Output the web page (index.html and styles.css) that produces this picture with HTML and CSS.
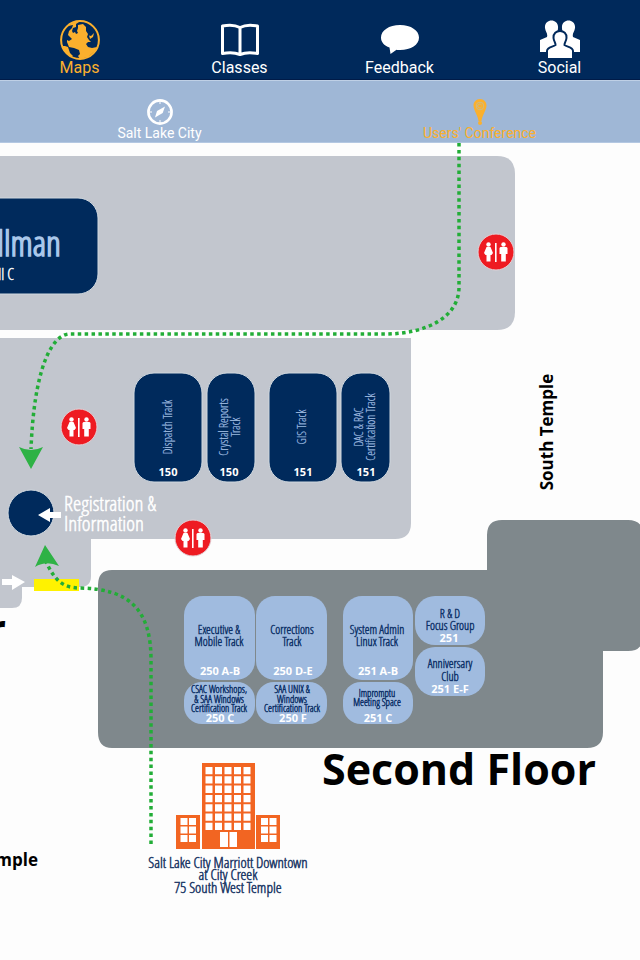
FILE: index.html
```html
<!DOCTYPE html>
<html lang="en">
<head>
<meta charset="utf-8">
<meta name="viewport" content="width=device-width, initial-scale=1">
<title>Users' Conference Map</title>
<link rel="stylesheet" href="styles.css">
</head>
<body>
<nav class="tabs" aria-label="Main">
  <a class="tab active" href="#maps">
    <svg class="tab-icon" viewBox="0 0 40 40" aria-hidden="true">
      <circle cx="20" cy="20" r="18.9" fill="none" stroke="currentColor" stroke-width="2"/>
      <path fill="currentColor" d="M8 6 L14 2 L19 2 L16 4 L16 7 L13 8 L12 11 L13 13 L15 12 L16 14 L18 13 L17 11 L18 8 L18 5 L23 4 L26 7 L26 11 L28 14 L27 17 L29 20 L31 22 L28 22 L26 24 L28 27 L32 28 L37 27 L35 31 L28 37 L20 39 L18 36 L20 34 L19 30 L14 28 L9 27 L7 22 L7 20 L9 21 L12 19 L10 17 L8 15 L9 11 L12 8 L13 5 Z"/>
      <path fill="currentColor" d="M2 26 L5 26 L8 27 L10 33 L13 36 L11 37 L5 32 Z"/>
      <path fill="currentColor" d="M29 15.500 L31 16 L34 13 L33 17 L30 19 Z"/>
    </svg>
    <span>Maps</span>
  </a>
  <a class="tab" href="#classes">
    <svg class="tab-icon" viewBox="0 0 40 40" aria-hidden="true">
      <path fill="none" stroke="currentColor" stroke-width="3" stroke-linejoin="round" d="M20 7.500 C15 4.800 8 4.800 2.500 6 V33.500 C8 32.500 15 32.500 20 34.500 C25 32.500 32 32.500 37.500 33.500 V6 C32 4.800 25 4.800 20 7.500 V34.500"/>
    </svg>
    <span>Classes</span>
  </a>
  <a class="tab" href="#feedback">
    <svg class="tab-icon" viewBox="0 0 40 40" aria-hidden="true">
      <path fill="currentColor" d="M20 5 C31 5 39 10.500 39 17.500 C39 25 31 30 20 30 C18.500 30 17.500 30 16.500 29.700 L10.500 34 L9.500 27.500 C4 25.500 1 22 1 17.500 C1 10.500 9 5 20 5 Z"/>
    </svg>
    <span>Feedback</span>
  </a>
  <a class="tab" href="#social">
    <svg class="tab-icon" viewBox="0 0 40 40" aria-hidden="true">
      <g fill="currentColor">
        <path d="M5 8 C4 -2 19 -2 18 8 C18 12 16 13 16 16 L21 20 V32 H0 V20 L7 17 C8 13 5.500 12 5 8 Z"/>
        <path d="M22 8 C21 -2 36 -2 35 8 C34.500 12 32 13 33 17 L40 20 V32 H19 V20 L24 16 C24 13 22 12 22 8 Z"/>
        <path class="front-person" d="M13.500 18 C12.500 8.500 27.500 8.500 26.500 18 C26 22 24.500 22 24.500 25 C27 27 33 27 33 31 V39 H7 V31 C7 27 13 27 15.500 25 C15.500 22 14 22 13.500 18 Z"/>
      </g>
    </svg>
    <span>Social</span>
  </a>
</nav>

<nav class="subtabs" aria-label="Maps">
  <a class="subtab" href="#city">
    <svg class="subtab-icon" viewBox="0 0 26 26" aria-hidden="true">
      <circle cx="13" cy="13" r="11.600" fill="none" stroke="currentColor" stroke-width="2.600"/>
      <path fill="currentColor" d="M18 7.500 L15.700 14 L8 18.500 L10 12 Z"/>
      <path stroke="currentColor" stroke-width="1" d="M13 2 V5 M13 21 V24 M2 13 H5 M21 13 H24"/>
    </svg>
    <span>Salt Lake City</span>
  </a>
  <a class="subtab active" href="#conference" aria-current="page">
    <svg class="subtab-icon" viewBox="0 0 26 26" aria-hidden="true">
      <path fill="currentColor" d="M13 0 C17 0 19.500 3 19.500 6.500 C19.500 11 15 17 14.500 22 H11.500 C11 17 6.500 11 6.500 6.500 C6.500 3 9 0 13 0 Z"/>
      <circle cx="13" cy="24" r="2" fill="currentColor"/>
      <circle cx="13" cy="7" r="3.800" fill="none" stroke="#cdbb86" stroke-width="1"/>
      <path fill="none" stroke="#cdbb86" stroke-width="1" d="M14.500 6 A2 2 0 1 0 14.500 8"/>
    </svg>
    <span>Users' Conference</span>
  </a>
</nav>

<main>
<svg class="map" viewBox="0 143 640 817" role="img" aria-label="Conference floor plan">
  <defs>
    <g id="restroom">
      <circle r="18" fill="#ee1b22" stroke="#e3d3d8" stroke-width="1"/>
      <g fill="#fff">
        <rect x="-1" y="-9" width="1.600" height="19"/>
        <circle cx="-7.500" cy="-7.500" r="2.200"/>
        <path d="M-9.500 -5 H-5.500 L-3 1 L-4.500 3 L-5.500 3 V9.500 H-9.500 V3 L-10.500 3 L-12 1 Z"/>
        <circle cx="7.500" cy="-7.500" r="2.200"/>
        <path d="M4.500 -5 H10.500 L11.500 -4 V2 H9.800 V9.500 H5.200 V2 H3.500 V-4 Z"/>
      </g>
    </g>
  </defs>

  <g class="first-floor">
    <path d="M0 156 H497 Q515 156 515 174 V312 Q515 330 497 330 H0 Z"/>
    <path d="M0 338 H411 V523 Q411 539 395 539 H91 V576 Q91 587 80 587 H22 V598 Q22 608 12 608 H0 Z"/>
  </g>
  <path class="second-floor" d="M112 570 H487 V535 Q487 520 502 520 H628 Q643 520 643 535 V636 Q643 651 628 651 H603 V732 Q603 748 587 748 H112 Q98 748 98 732 V585 Q98 570 112 570 Z"/>

  <g class="room-dark">
    <rect x="-40" y="198" width="138" height="96" rx="20"/>
    <rect x="134" y="373" width="68" height="109" rx="20"/>
    <rect x="207" y="373" width="48" height="109" rx="20"/>
    <rect x="269" y="373" width="68" height="109" rx="20"/>
    <rect x="341" y="373" width="49" height="109" rx="20"/>
    <circle cx="31" cy="513" r="23"/>
  </g>
  <text class="hall" x="61" y="256">llman</text>
  <text class="hall-sub" x="14" y="280">ll C</text>

  <g class="track-dark">
    <text transform="translate(172 427) rotate(-90)">Dispatch Track</text>
    <text transform="translate(228 427) rotate(-90)">Crystal Reports</text>
    <text transform="translate(240 427) rotate(-90)">Track</text>
    <text transform="translate(306 427) rotate(-90)">GIS Track</text>
    <text transform="translate(363 427) rotate(-90)">DAC &amp; RAC</text>
    <text transform="translate(375 427) rotate(-90)">Certification Track</text>
  </g>
  <g class="number">
    <text x="168" y="476">150</text>
    <text x="229" y="476">150</text>
    <text x="303" y="476">151</text>
    <text x="366" y="476">151</text>
  </g>

  <g class="info">
    <text x="64" y="511">Registration &amp;</text>
    <text x="64" y="531">Information</text>
  </g>
  <path fill="#fff" d="M38 515 L50 508 V512 H61 V518 H50 V522 Z"/>
  <path fill="#fff" d="M2 579 H12 V575 L25 582 L12 590 V585 H2 Z"/>
  <rect x="34" y="579" width="45" height="12" fill="#fff200"/>

  <g class="room-light">
    <rect x="184" y="596" width="71" height="84" rx="19"/>
    <rect x="256" y="596" width="71" height="84" rx="19"/>
    <rect x="184" y="682" width="71" height="42" rx="18"/>
    <rect x="256" y="682" width="71" height="42" rx="18"/>
    <rect x="343" y="596" width="70" height="84" rx="19"/>
    <rect x="343" y="682" width="70" height="42" rx="18"/>
    <rect x="415" y="596" width="70" height="49" rx="20"/>
    <rect x="415" y="647" width="70" height="49" rx="20"/>
  </g>
  <g class="track-light">
    <text x="219" y="634">Executive &amp;</text>
    <text x="219" y="646">Mobile Track</text>
    <text x="292" y="634">Corrections</text>
    <text x="292" y="646">Track</text>
    <text x="377" y="634">System Admin</text>
    <text x="377" y="646">Linux Track</text>
    <text x="450" y="618">R &amp; D</text>
    <text x="450" y="630">Focus Group</text>
    <text x="450" y="668">Anniversary</text>
    <text x="450" y="681">Club</text>
  </g>
  <g class="track-light small">
    <text x="219" y="693">CSAC Workshops,</text>
    <text x="219" y="703">&amp; SAA Windows</text>
    <text x="219" y="712">Certification Track</text>
    <text x="292" y="693">SAA UNIX &amp;</text>
    <text x="292" y="703">Windows</text>
    <text x="292" y="712">Certification Track</text>
    <text x="377" y="697">Impromptu</text>
    <text x="377" y="706">Meeting Space</text>
  </g>
  <g class="number">
    <text x="220" y="675">250 A-B</text>
    <text x="293" y="675">250 D-E</text>
    <text x="220" y="722">250 C</text>
    <text x="293" y="722">250 F</text>
    <text x="378" y="675">251 A-B</text>
    <text x="378" y="722">251 C</text>
    <text x="449" y="642">251</text>
    <text x="450" y="693">251 E-F</text>
  </g>

  <g class="route">
    <path d="M459 143 V287 C459 318 425 334 385 334 H68 C50 337 34 372 31 449"/>
    <path d="M151 844 V660 C151 610 130 589 80 588 C62 588 55 580 46 562"/>
  </g>
  <g fill="#2eb245">
    <path d="M19 447 Q31 453 43 447 L31 469 Z"/>
    <path d="M45 545 L59 566 Q46 560 35 567 Z"/>
  </g>

  <use href="#restroom" x="496" y="252"/>
  <use href="#restroom" x="79" y="427"/>
  <use href="#restroom" x="193" y="538"/>

  <g class="hotel">
    <rect x="202" y="763" width="53" height="86"/>
    <rect x="176" y="815" width="24" height="34"/>
    <rect x="256" y="815" width="24" height="34"/>
    <path class="windows tower" d="M209 767 V830 M218.500 767 V830 M228 767 V830 M237.500 767 V830 M247 767 V830"/>
    <path class="windows wing" d="M184 818 V842 M192.500 818 V842 M264.500 818 V842 M273 818 V842"/>
    <path fill="#fff" d="M220 832 H228 V847 H220 Z M229.500 832 H237 V847 H229.500 Z"/>
  </g>
  <g class="address">
    <text x="228" y="868">Salt Lake City Marriott Downtown</text>
    <text x="228" y="880">at City Creek</text>
    <text x="228" y="893">75 South West Temple</text>
  </g>

  <text class="floor-name" x="459" y="785">Second Floor</text>
  <text class="floor-name end" x="6" y="645">r</text>
  <text class="street" transform="translate(553 432) rotate(-90)">South Temple</text>
  <text class="street end" x="38" y="866">mple</text>
</svg>
</main>
</body>
</html>
```
FILE: styles.css
```css
* {
  box-sizing: border-box;
}

body {
  margin: 0;
  background: #fdfdfd;
  font-family: Roboto, "Liberation Sans", sans-serif;
}

a {
  color: #fff;
  text-decoration: none;
}

.active {
  color: #fbb02d;
}

.tabs {
  display: grid;
  grid-template-columns: repeat(4, 1fr);
  background: #00295b;
  border-bottom: 1px solid #001b48;
}

.tab {
  display: flex;
  flex-direction: column;
  align-items: center;
  padding: 20px 1px 3px 0;
  font-size: 16px;
  line-height: 16px;
}

.tab-icon {
  width: 40px;
  height: 40px;
}

.front-person {
  stroke: #00295b;
  stroke-width: 2px;
}

.subtabs {
  display: grid;
  grid-template-columns: repeat(2, 1fr);
  background: #9fb7d6;
  border-top: 1px solid #bfd0e6;
  border-bottom: 1px solid #b4c8e2;
}

.subtab {
  display: flex;
  flex-direction: column;
  align-items: center;
  padding: 18px 1px 1px 0;
  font-size: 14px;
  line-height: 16px;
}

.subtab-icon {
  width: 26px;
  height: 26px;
}

.map {
  display: block;
  width: 100%;
  height: auto;
  font-family: "Open Sans Condensed Light", "Roboto Condensed", "Open Sans Condensed", "Open Sans", sans-serif;
  text-anchor: middle;
}

.first-floor {
  fill: #c2c6ce;
}

.second-floor {
  fill: #7f888c;
}

.room-dark {
  fill: #002a5c;
  stroke: #d0d8df;
  stroke-width: 1px;
}

.room-light {
  fill: #a0bbdf;
}

.hall {
  fill: #a9c7ea;
  stroke: #a9c7ea;
  stroke-width: 1.5px;
  font-size: 35px;
  text-anchor: end;
}

.hall-sub {
  fill: #fff;
  stroke: #fff;
  stroke-width: 0.4px;
  font-size: 16px;
  text-anchor: end;
}

.track-dark {
  fill: #9fbbe0;
  stroke: #9fbbe0;
  stroke-width: 0.2px;
  font-size: 12px;
}

.track-light {
  fill: #0b2f66;
  stroke: #0b2f66;
  stroke-width: 0.4px;
  font-size: 12px;
}

.small {
  font-size: 10px;
}

.number {
  fill: #fff;
  font-family: "Open Sans", sans-serif;
  font-size: 11px;
  font-weight: 700;
}

.info {
  fill: #fff;
  stroke: #fff;
  stroke-width: 0.5px;
  font-size: 21px;
  text-anchor: start;
}

.route {
  fill: none;
  stroke: #22ad37;
  stroke-width: 3.5px;
  stroke-dasharray: 3.5px 3.4px;
}

.hotel {
  fill: #f26522;
}

.windows {
  fill: none;
  stroke: #fff;
  stroke-width: 7px;
}

.tower {
  stroke-dasharray: 7.300px 2px;
}

.wing {
  stroke-dasharray: 7px 1.500px;
}

.address {
  fill: #1c3866;
  stroke: #1c3866;
  stroke-width: 0.5px;
  font-size: 15px;
}

.floor-name,
.street {
  fill: #000;
  font-family: "Open Sans", sans-serif;
  font-weight: 700;
}

.floor-name {
  font-size: 43px;
}

.street {
  font-size: 17px;
}

.end {
  text-anchor: end;
}
```
